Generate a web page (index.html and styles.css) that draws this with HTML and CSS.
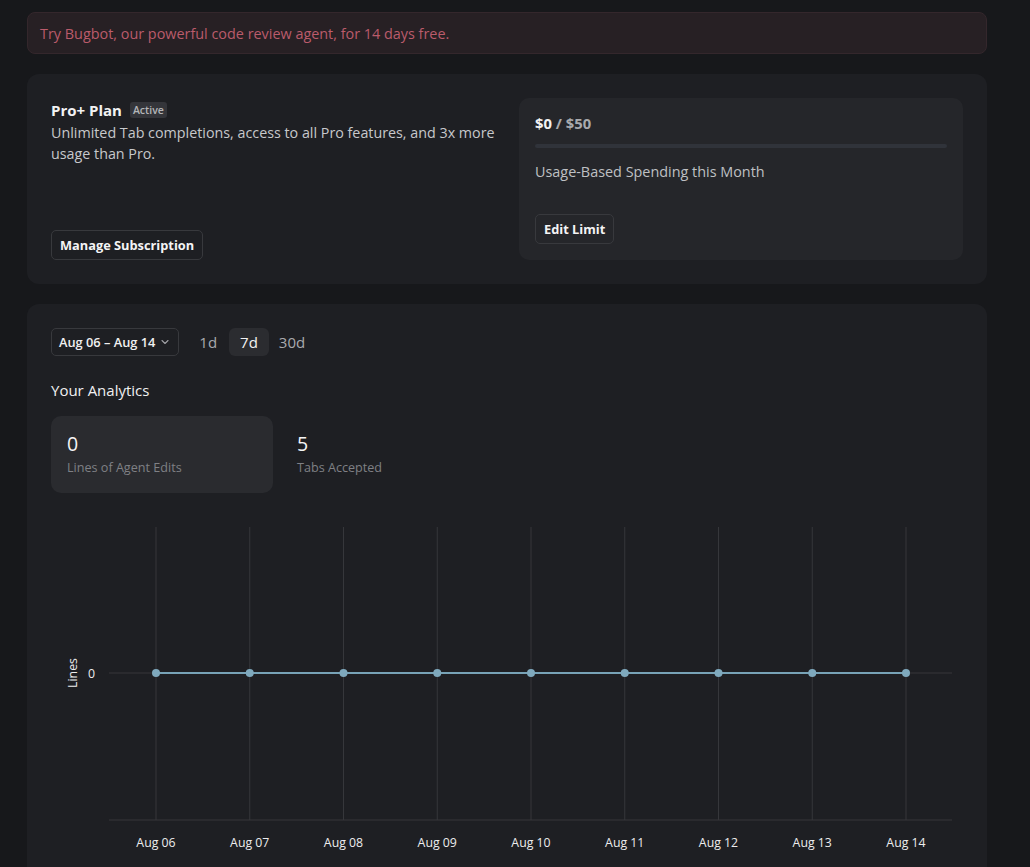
FILE: index.html
```html
<!DOCTYPE html>
<html>
<head>
<meta charset="utf-8">
<link rel="stylesheet" href="styles.css">
</head>
<body>
<div class="page">
  <div class="banner">Try Bugbot, our powerful code review agent, for 14 days free.</div>

  <section class="card plan-card">
    <div class="plan-left">
      <div>
        <div class="plan-title"><span>Pro+ Plan</span><span class="badge">Active</span></div>
        <p class="plan-desc">Unlimited Tab completions, access to all Pro features, and 3x more usage than Pro.</p>
      </div>
      <div><button class="btn">Manage Subscription</button></div>
    </div>
    <div class="usage-box">
      <div class="usage-amount"><span class="strong">$0</span> / $50</div>
      <div class="progress"><div class="progress-fill" style="width:0%"></div></div>
      <div class="usage-label">Usage-Based Spending this Month</div>
      <div><button class="btn">Edit Limit</button></div>
    </div>
  </section>

  <section class="card analytics-card">
    <div class="controls">
      <button class="date-btn">Aug 06 – Aug 14
        <svg class="chev" width="10" height="10" viewBox="0 0 10 10"><path d="M2 3.5 L5 6.5 L8 3.5" fill="none" stroke="#a0a1a5" stroke-width="1.1" stroke-linecap="round" stroke-linejoin="round"/></svg>
      </button>
      <div class="ranges">
        <span class="range">1d</span>
        <span class="range active">7d</span>
        <span class="range">30d</span>
      </div>
    </div>
    <h2 class="section-title">Your Analytics</h2>
    <div class="stats">
      <div class="stat selected">
        <div class="stat-value">0</div>
        <div class="stat-label">Lines of Agent Edits</div>
      </div>
      <div class="stat">
        <div class="stat-value">5</div>
        <div class="stat-label">Tabs Accepted</div>
      </div>
    </div>
    <svg class="chart" width="912" height="350" viewBox="0 0 912 350">
      <g stroke="#36373b" stroke-width="1">
        <line x1="105" y1="17" x2="105" y2="310"/>
        <line x1="198.75" y1="17" x2="198.75" y2="310"/>
        <line x1="292.5" y1="17" x2="292.5" y2="310"/>
        <line x1="386.25" y1="17" x2="386.25" y2="310"/>
        <line x1="480" y1="17" x2="480" y2="310"/>
        <line x1="573.75" y1="17" x2="573.75" y2="310"/>
        <line x1="667.5" y1="17" x2="667.5" y2="310"/>
        <line x1="761.25" y1="17" x2="761.25" y2="310"/>
        <line x1="855" y1="17" x2="855" y2="310"/>
        <line x1="58" y1="163" x2="901" y2="163"/>
        <line x1="58" y1="310" x2="901" y2="310"/>
      </g>
      <line x1="105" y1="163" x2="855" y2="163" stroke="#78a3b7" stroke-width="2"/>
      <g fill="#7fa9bd">
        <circle cx="105" cy="163" r="4"/>
        <circle cx="198.75" cy="163" r="4"/>
        <circle cx="292.5" cy="163" r="4"/>
        <circle cx="386.25" cy="163" r="4"/>
        <circle cx="480" cy="163" r="4"/>
        <circle cx="573.75" cy="163" r="4"/>
        <circle cx="667.5" cy="163" r="4"/>
        <circle cx="761.25" cy="163" r="4"/>
        <circle cx="855" cy="163" r="4"/>
      </g>
      <text class="axis-text" x="44" y="167.5" text-anchor="end">0</text>
      <text class="axis-text" transform="translate(25.5 163) rotate(-90)" text-anchor="middle">Lines</text>
      <g class="axis-text" text-anchor="middle">
        <text x="105" y="337">Aug 06</text>
        <text x="198.75" y="337">Aug 07</text>
        <text x="292.5" y="337">Aug 08</text>
        <text x="386.25" y="337">Aug 09</text>
        <text x="480" y="337">Aug 10</text>
        <text x="573.75" y="337">Aug 11</text>
        <text x="667.5" y="337">Aug 12</text>
        <text x="761.25" y="337">Aug 13</text>
        <text x="855" y="337">Aug 14</text>
      </g>
    </svg>
  </section>
</div>
</body>
</html>
```

FILE: styles.css
```css
* { box-sizing: border-box; }
html, body {
  margin: 0;
  padding: 0;
  background: #17181b;
  color: #e6e6e8;
  font-family: "Open Sans", "Noto Sans", "Liberation Sans", sans-serif;
  overflow: hidden;
}
.page {
  width: 960px;
  margin-left: 27px;
  padding-top: 12px;
  display: flex;
  flex-direction: column;
  gap: 20px;
}
.banner {
  height: 42px;
  display: flex;
  align-items: center;
  padding: 0 12px;
  background: #272024;
  border: 1px solid #34272c;
  border-radius: 8px;
  color: #ba5b6b;
  font-size: 14.4px;
}
.card {
  background: #1e1f23;
  border-radius: 12px;
  padding: 24px;
}
.plan-card {
  display: flex;
  gap: 24px;
}
.plan-left {
  flex: 1;
  display: flex;
  flex-direction: column;
  justify-content: space-between;
}
.plan-title {
  display: flex;
  align-items: center;
  gap: 8px;
  font-size: 15px;
  font-weight: 700;
  color: #f2f2f3;
  height: 24px;
}
.badge {
  font-size: 10.5px;
  font-weight: 600;
  color: #b4b5b8;
  background: #34353a;
  border-radius: 3px;
  padding: 1px 3px;
  line-height: 14px;
}
.plan-desc {
  margin: 0;
  font-size: 14.3px;
  line-height: 21px;
  color: #c7c8cb;
}
.btn {
  font-family: inherit;
  font-size: 12.8px;
  font-weight: 700;
  color: #f4f4f5;
  background: transparent;
  border: 1px solid #38393d;
  border-radius: 5px;
  height: 30px;
  padding: 0 8px;
  cursor: pointer;
}
.usage-box {
  width: 444px;
  background: #25262a;
  border-radius: 10px;
  padding: 14px 16px 16px;
  display: flex;
  flex-direction: column;
}
.usage-amount {
  font-size: 14.8px;
  font-weight: 700;
  color: #a9aaad;
  line-height: 22px;
}
.usage-amount .strong { color: #f2f2f3; }
.progress {
  margin-top: 10px;
  height: 4px;
  background: #30333a;
  border-radius: 2px;
}
.progress-fill { height: 100%; background: #7fa9bd; }
.usage-label {
  margin-top: 13px;
  font-size: 14.4px;
  color: #bfc0c3;
  line-height: 22px;
  margin-bottom: 31px;
}
.analytics-card {
  height: 600px;
}
.controls {
  display: flex;
  align-items: center;
  gap: 20px;
}
.date-btn {
  font-family: inherit;
  display: flex;
  align-items: center;
  gap: 5px;
  height: 28px;
  padding: 0 8px 0 7px;
  background: transparent;
  border: 1px solid #38393d;
  border-radius: 5px;
  color: #f0f0f1;
  font-size: 12.8px;
  font-weight: 600;
}
.chev { display: block; }
.ranges {
  display: flex;
  align-items: center;
}
.range {
  height: 28px;
  display: flex;
  align-items: center;
  padding: 0 10px;
  font-size: 15px;
  color: #a9aaae;
  border-radius: 6px;
}
.range:first-child { padding-left: 0; padding-right: 12px; }
.range:last-child { padding-left: 10px; }
.range.active {
  background: #2b2c30;
  color: #f2f2f3;
  padding: 0 11px;
}
.section-title {
  margin: 23px 0 0;
  font-size: 15px;
  font-weight: 500;
  color: #f0f0f1;
  line-height: 22px;
}
.stats {
  display: flex;
  margin-top: 15px;
}
.stat {
  width: 222px;
  height: 77px;
  padding: 14px 16px;
  border-radius: 10px;
}
.stat + .stat { padding-left: 24px; }
.stat.selected { background: #2a2b2f; }
.stat-value {
  font-size: 19.5px;
  color: #f5f5f6;
  line-height: 28px;
}
.stat-label {
  margin-top: 1px;
  font-size: 12.6px;
  color: #7f8085;
  line-height: 17px;
}
.chart {
  display: block;
  margin-top: 17px;
}
.axis-text {
  font-family: "Open Sans", "Noto Sans", sans-serif;
  font-size: 12.3px;
  fill: #ededee;
}
```
